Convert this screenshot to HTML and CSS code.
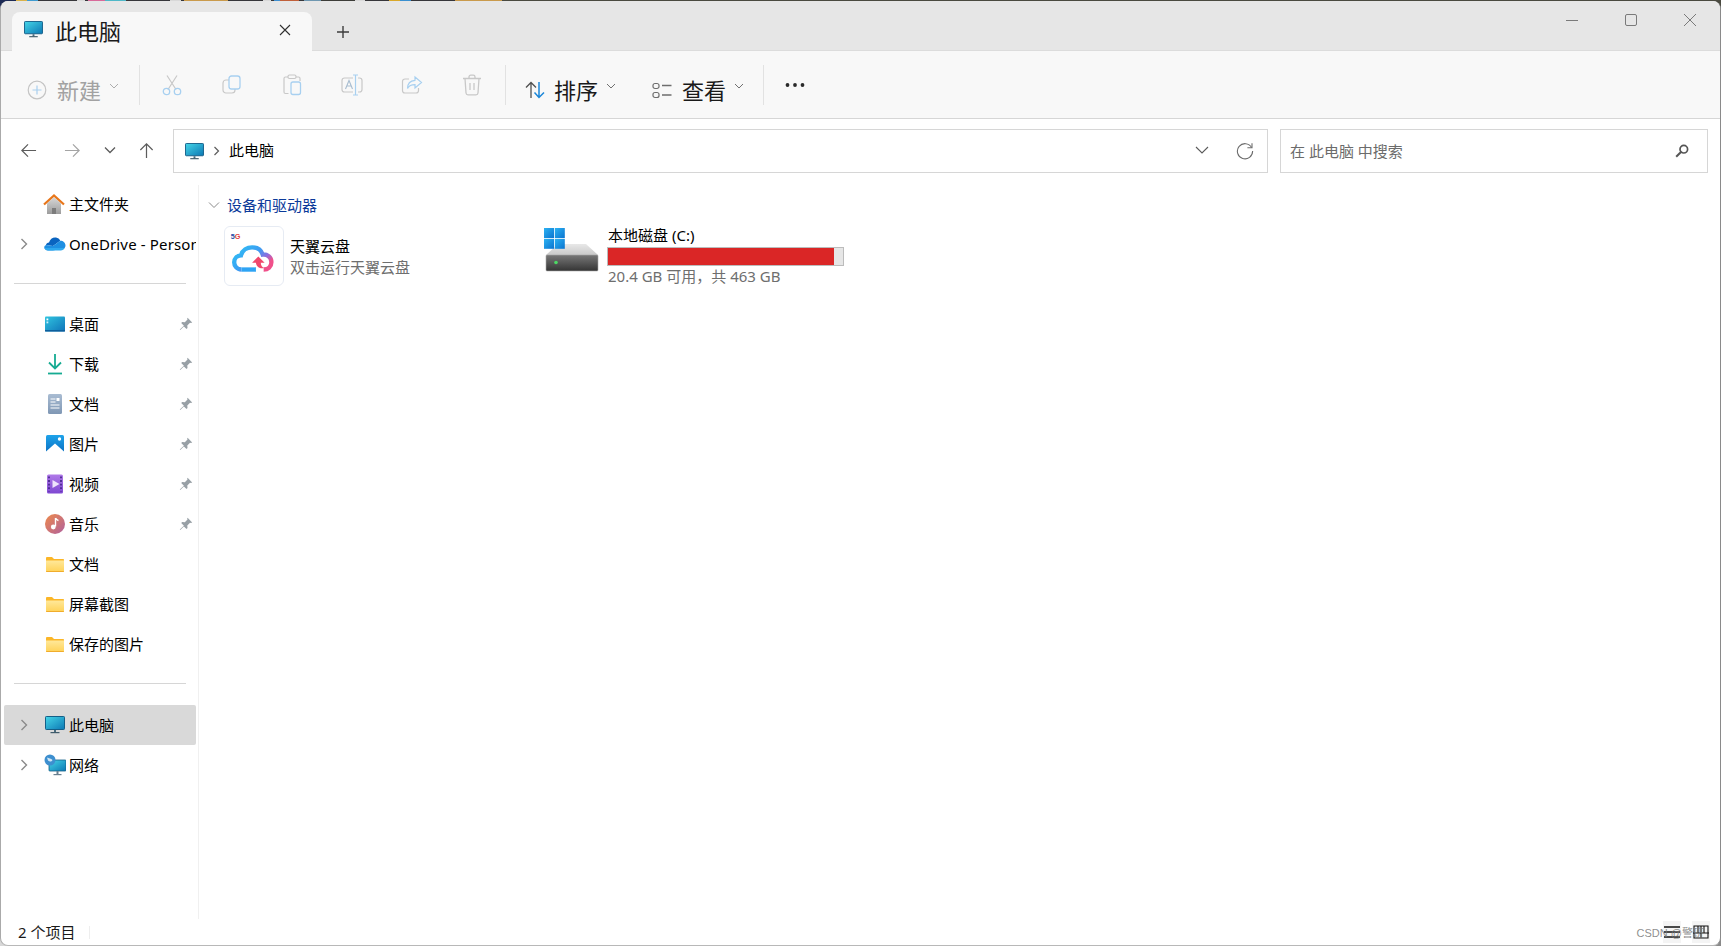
FILE: index.html
```html
<!DOCTYPE html>
<html lang="zh-CN">
<head>
<meta charset="utf-8">
<title>此电脑</title>
<link rel="stylesheet" href="styles.css">
</head>
<body>
<svg class="defs" aria-hidden="true">
  <defs>
    <linearGradient id="pcg" x1="0" y1="0" x2="1" y2="1"><stop offset="0" stop-color="#45d6e8"/><stop offset="1" stop-color="#0c78b4"/></linearGradient>
    <linearGradient id="deskg" x1="0" y1="0" x2="1" y2="1"><stop offset="0" stop-color="#30c4e0"/><stop offset="1" stop-color="#0f73b8"/></linearGradient>
    <linearGradient id="homeg" x1="0" y1="0" x2="0" y2="1"><stop offset="0" stop-color="#d8d8d8"/><stop offset="1" stop-color="#9c9c9c"/></linearGradient>
    <linearGradient id="docg" x1="0" y1="0" x2="0" y2="1"><stop offset="0" stop-color="#a9bcd2"/><stop offset="1" stop-color="#7f97b4"/></linearGradient>
    <linearGradient id="picg" x1="0" y1="0" x2="0" y2="1"><stop offset="0" stop-color="#1ea3ea"/><stop offset="1" stop-color="#0b6fc2"/></linearGradient>
    <linearGradient id="vidg" x1="0" y1="0" x2="0" y2="1"><stop offset="0" stop-color="#b07ae8"/><stop offset="1" stop-color="#7f48d2"/></linearGradient>
    <linearGradient id="musg" x1="0" y1="0" x2="1" y2="1"><stop offset="0" stop-color="#ee8a4a"/><stop offset="1" stop-color="#b0609e"/></linearGradient>
    <linearGradient id="folg" x1="0" y1="0" x2="0" y2="1"><stop offset="0" stop-color="#ffe89a"/><stop offset="1" stop-color="#ffd257"/></linearGradient>
    <linearGradient id="cloudg" x1="0" y1="0" x2="1" y2="0.6"><stop offset="0" stop-color="#2cc4f5"/><stop offset="0.55" stop-color="#3d9cf2"/><stop offset="0.8" stop-color="#8a6ee0"/><stop offset="1" stop-color="#f0508a"/></linearGradient>
    <linearGradient id="driveg" x1="0" y1="0" x2="0" y2="1"><stop offset="0" stop-color="#787878"/><stop offset="1" stop-color="#343434"/></linearGradient>
    <linearGradient id="drivet" x1="0" y1="0" x2="0" y2="1"><stop offset="0" stop-color="#e8e8e8"/><stop offset="1" stop-color="#c4c4c4"/></linearGradient>
    <linearGradient id="wing" x1="0" y1="0" x2="1" y2="1"><stop offset="0" stop-color="#2cb2f2"/><stop offset="1" stop-color="#0a74d0"/></linearGradient>
    <symbol id="pc" viewBox="0 0 20 18">
      <rect x="0.5" y="0.5" width="19" height="13" rx="0.8" fill="url(#pcg)" stroke="#145f88"/>
      <rect x="9" y="14" width="2" height="2.4" fill="#4a6a7c"/>
      <rect x="5.5" y="16" width="9" height="1.2" fill="#3f5b6b"/>
    </symbol>
    <symbol id="folder" viewBox="0 0 18 15">
      <path d="M0 1.2C0 .5.5 0 1.2 0H6l2 2h9c.6 0 1 .4 1 1v1H0z" fill="#fbb628"/>
      <path d="M0 3.5h18V14c0 .6-.4 1-1 1H1c-.6 0-1-.4-1-1z" fill="url(#folg)"/>
      <path d="M0 14h18v.2c0 .5-.4.8-.8.8H.8C.4 15 0 14.700 0 14.200z" fill="#f0ac2c"/>
    </symbol>
    <symbol id="pin" viewBox="0 0 14 14">
      <path d="M8.600.8l4.600 4.600-1.200.7-1-.3-2.700 2.700.2 2.600-1 1-2.600-2.700L1.200 13l-.4-.4 4.100-3.900L2.200 6l1-1 2.600.2 2.700-2.700-.3-1z" fill="#98a0a6"/>
    </symbol>
    <symbol id="chev" viewBox="0 0 8 12">
      <path d="M1.500 1l5 5-5 5" fill="none" stroke="#8a8a8a" stroke-width="1.400"/>
    </symbol>
    <symbol id="down" viewBox="0 0 10 6">
      <path d="M1 1l4 4 4-4" fill="none" stroke="#707070" stroke-width="1"/>
    </symbol>
  </defs>
</svg>

<div class="window">
  <header class="titlebar">
    <div class="tab">
      <svg class="i-tabpc"><use href="#pc"/></svg>
      <span class="tab-title">此电脑</span>
      <svg class="i-close" viewBox="0 0 12 12"><path d="M1 1l10 10M11 1L1 11" stroke="#303030" stroke-width="1.100" fill="none"/></svg>
    </div>
    <svg class="i-plus" viewBox="0 0 12 12"><path d="M6 0v12M0 6h12" stroke="#3c3c3c" stroke-width="1.400" fill="none"/></svg>
    <div class="winctl">
      <svg class="wc" viewBox="0 0 14 14"><path d="M1 7.500h12" stroke="#7a7a7a" fill="none"/></svg>
      <svg class="wc" viewBox="0 0 14 14"><rect x="1.500" y="1.500" width="11" height="11" rx="1.500" stroke="#7a7a7a" fill="none"/></svg>
      <svg class="wc" viewBox="0 0 14 14"><path d="M1 1l12 12M13 1L1 13" stroke="#7a7a7a" fill="none"/></svg>
    </div>
  </header>

  <div class="toolbar">
    <div class="tool-new">
      <svg class="i-new" viewBox="0 0 20 20"><circle cx="10" cy="10" r="8.800" fill="none" stroke="#c4c4c4" stroke-width="1.200"/><path d="M10 5.500v9M5.500 10h9" stroke="#a9cfee" stroke-width="1.200"/></svg>
      <span class="tool-label muted">新建</span>
      <svg class="i-down dim"><use href="#down"/></svg>
    </div>
    <div class="sep"></div>
    <div class="icons">
      <div class="ibtn"><svg viewBox="0 0 20 22"><path d="M5 1.500l9 14M15 1.500l-9 14" stroke="#c8c8c8" stroke-width="1.200" fill="none"/><circle cx="4.500" cy="17.500" r="3.200" fill="none" stroke="#a8d0f0" stroke-width="1.300"/><circle cx="15.500" cy="17.500" r="3.200" fill="none" stroke="#a8d0f0" stroke-width="1.300"/></svg></div>
      <div class="ibtn"><svg viewBox="0 0 20 22"><rect x="1" y="6" width="12" height="13" rx="3" fill="#f8f8f8" stroke="#c8c8c8" stroke-width="1.200"/><rect x="7" y="2" width="11" height="13" rx="2.500" fill="#f8f8f8" stroke="#a8d0f0" stroke-width="1.300"/></svg></div>
      <div class="ibtn"><svg viewBox="0 0 20 22"><path d="M6 3H3.500C2.500 3 2 3.500 2 4.500V18c0 1 .5 1.500 1.500 1.500h3M14 3h2.500c1 0 1.500.5 1.500 1.500V7" fill="none" stroke="#c8c8c8" stroke-width="1.200"/><rect x="6" y="1" width="8" height="3.500" rx="1.500" fill="none" stroke="#c8c8c8" stroke-width="1.200"/><rect x="9" y="8" width="9.500" height="12.500" rx="2" fill="none" stroke="#a8d0f0" stroke-width="1.300"/></svg></div>
      <div class="ibtn"><svg viewBox="0 0 22 22"><path d="M12 4H3.500C2 4 1 5 1 6.500v9C1 17 2 18 3.500 18H12M17 4h1.500C20 4 21 5 21 6.500v9c0 1.500-1 2.500-2.500 2.500H17" fill="none" stroke="#c8c8c8" stroke-width="1.200"/><path d="M14.500 1v20M12 1h5M12 21h5" fill="none" stroke="#a8d0f0" stroke-width="1.200"/><path d="M4.500 15L8 6.500 11.500 15M5.800 12h4.400" fill="none" stroke="#a8bdd0" stroke-width="1.100"/></svg></div>
      <div class="ibtn"><svg viewBox="0 0 22 22"><path d="M8 5H4C2.500 5 1.500 6 1.500 7.500v9C1.500 18 2.500 19 4 19h11c1.500 0 2.500-1 2.500-2.500V14" fill="none" stroke="#c8c8c8" stroke-width="1.200"/><path d="M14 3l6.500 5.500L14 14v-3.300c-3.500 0-6 1-7.500 3.800 0-4.800 3-7.800 7.500-8.200z" fill="none" stroke="#a8d0f0" stroke-width="1.200"/></svg></div>
      <div class="ibtn"><svg viewBox="0 0 20 22"><path d="M1 4.500h18M7 4.500V3c0-1 .8-1.800 1.800-1.800h2.400C12.200 1.200 13 2 13 3v1.500M3 4.500l1 14.500c.1 1 .8 1.800 2 1.800h8c1.200 0 1.900-.8 2-1.800l1-14.500" fill="none" stroke="#c8c8c8" stroke-width="1.300"/><path d="M8 9v7M12 9v7" stroke="#c8c8c8" stroke-width="1.300"/></svg></div>
    </div>
    <div class="sep"></div>
    <div class="tool-sort">
      <svg class="i-sort" viewBox="0 0 20 18"><path d="M6 17V1.500M1 6.500l5-5 5 5" stroke="#505050" stroke-width="1.300" fill="none"/><path d="M14 1v15.500M9.500 11.500l4.500 5 5-5" stroke="#1a86d8" stroke-width="1.500" fill="none"/></svg>
      <span class="tool-label">排序</span>
      <svg class="i-down"><use href="#down"/></svg>
    </div>
    <div class="tool-view">
      <svg class="i-view" viewBox="0 0 20 18"><rect x="1" y="1.500" width="6" height="5" rx="2" fill="none" stroke="#6e6e6e" stroke-width="1.200"/><rect x="1" y="10.500" width="6" height="5" rx="2" fill="none" stroke="#6e6e6e" stroke-width="1.200"/><path d="M10 3.500h9.500M10 13h9.500" stroke="#6e6e6e" stroke-width="1.300"/></svg>
      <span class="tool-label">查看</span>
      <svg class="i-down"><use href="#down"/></svg>
    </div>
    <div class="sep"></div>
    <svg class="i-more" viewBox="0 0 20 6"><circle cx="2.500" cy="3" r="1.900" fill="#2a2a2a"/><circle cx="10" cy="3" r="1.900" fill="#2a2a2a"/><circle cx="17.500" cy="3" r="1.900" fill="#2a2a2a"/></svg>
  </div>

  <div class="navrow">
    <div class="navbtns">
      <svg class="nav" viewBox="0 0 18 16"><path d="M17 8H2M8.500 1.500L2 8l6.500 6.500" stroke="#5c5c5c" stroke-width="1.300" fill="none"/></svg>
      <svg class="nav" viewBox="0 0 18 16"><path d="M1 8h15M9.500 1.500L16 8l-6.500 6.500" stroke="#a4a4a4" stroke-width="1.300" fill="none"/></svg>
      <svg class="nav-d" viewBox="0 0 12 8"><path d="M1 1.500l5 5 5-5" stroke="#5c5c5c" stroke-width="1.300" fill="none"/></svg>
      <svg class="nav" viewBox="0 0 16 18"><path d="M8 17V2M1.500 8.500L8 2l6.500 6.500" stroke="#5c5c5c" stroke-width="1.300" fill="none"/></svg>
    </div>
    <div class="addr">
      <svg class="i-addrpc"><use href="#pc"/></svg>
      <svg class="i-crumb" viewBox="0 0 8 12"><path d="M1.500 2l4 4-4 4" fill="none" stroke="#5c5c5c" stroke-width="1.200"/></svg>
      <span class="crumb">此电脑</span>
      <svg class="i-addrdown" viewBox="0 0 14 8"><path d="M1 1l6 6 6-6" stroke="#5c5c5c" stroke-width="1.100" fill="none"/></svg>
      <svg class="i-refresh" viewBox="0 0 18 18"><path d="M15.600 5.500A7.600 7.600 0 1 0 16.600 9" stroke="#6c6c6c" stroke-width="1.100" fill="none"/><path d="M16 1.200v4.600h-4.600" stroke="#6c6c6c" stroke-width="1.100" fill="none"/></svg>
    </div>
    <div class="search">
      <span class="search-ph">在 此电脑 中搜索</span>
      <svg class="i-search" viewBox="0 0 14 14"><circle cx="8.800" cy="5.200" r="3.800" fill="none" stroke="#555" stroke-width="1.700"/><path d="M6 8L1.200 12.800" stroke="#555" stroke-width="2"/></svg>
    </div>
  </div>

  <div class="main">
    <nav class="sidebar">
      <div class="row">
        <svg class="ico ico-home" viewBox="0 0 22 20"><path d="M4 9.500L11 3l7 6.500V20H4z" fill="url(#homeg)"/><path d="M9 20v-6h4v6z" fill="#7c7c7c"/><path d="M1 10.500L11 1.500l10 9" fill="none" stroke="#e8761a" stroke-width="2.200"/></svg>
        <span class="label">主文件夹</span>
      </div>
      <div class="row">
        <svg class="chev"><use href="#chev"/></svg>
        <svg class="ico" viewBox="0 0 22 16"><path d="M5 6.500C6 3 9 1 12 1.500c2 .3 3.500 1.500 4.200 3.300L9 10 2 9c.2-1.500 1.500-2.500 3-2.500z" fill="#0a64c0"/><path d="M2 9l7 1 7.200-5.200c2.800-.2 5.300 2 5.300 4.700 0 .9-.3 1.800-.8 2.500L9 14.500H4c-2.200 0-3.800-1.500-3.800-3.200C.2 10.400.9 9.600 2 9z" fill="#1e8fe2"/><path d="M20.700 12c-.7 1.500-2.200 2.500-3.900 2.500H4C2.400 14.500 1 13.500.5 12z" fill="#2ea8ee"/></svg>
        <span class="label label-latin">OneDrive - Personal</span>
      </div>
      <div class="divider"></div>
      <div class="row">
        <svg class="ico" viewBox="0 0 22 17"><rect x="1" y="1" width="20" height="15" rx="1" fill="url(#deskg)"/><rect x="1" y="14.500" width="20" height="1.500" fill="#0e5f9c"/><rect x="2.500" y="3" width="1.800" height="1.800" fill="#fff"/><rect x="2.500" y="6" width="1.800" height="1.800" fill="#cdeefa"/></svg>
        <span class="label">桌面</span>
        <svg class="pin"><use href="#pin"/></svg>
      </div>
      <div class="row">
        <svg class="ico" viewBox="0 0 22 22"><path d="M11 1v14M5 9.500l6 6 6-6" stroke="#16ab92" stroke-width="1.800" fill="none"/><path d="M4 20.500h14" stroke="#16ab92" stroke-width="1.800"/></svg>
        <span class="label">下载</span>
        <svg class="pin"><use href="#pin"/></svg>
      </div>
      <div class="row">
        <svg class="ico" viewBox="0 0 22 22"><rect x="4" y="1" width="14" height="20" rx="1.500" fill="url(#docg)"/><path d="M6.500 6h5M6.500 9h5M6.500 12h9M6.500 15h9" stroke="#fff" stroke-width="1"/><rect x="12.500" y="5" width="3" height="3" fill="#fff"/></svg>
        <span class="label">文档</span>
        <svg class="pin"><use href="#pin"/></svg>
      </div>
      <div class="row">
        <svg class="ico" viewBox="0 0 22 22"><rect x="2" y="2" width="18" height="18" rx="1.500" fill="url(#picg)"/><path d="M2 18.500L11 10.500l9 8V20H2z" fill="#fff"/><circle cx="15.500" cy="6" r="1.700" fill="#fff"/></svg>
        <span class="label">图片</span>
        <svg class="pin"><use href="#pin"/></svg>
      </div>
      <div class="row">
        <svg class="ico" viewBox="0 0 22 22"><rect x="3" y="1.500" width="16" height="19" rx="1.500" fill="url(#vidg)"/><path d="M8.500 7l7 4-7 4z" fill="#efe4fb"/><path d="M5 3.500v15M17 3.500v15" stroke="#4a2a90" stroke-width="1.800" stroke-dasharray="1.800 1.800"/></svg>
        <span class="label">视频</span>
        <svg class="pin"><use href="#pin"/></svg>
      </div>
      <div class="row">
        <svg class="ico" viewBox="0 0 22 22"><circle cx="11" cy="11" r="10" fill="url(#musg)"/><path d="M11.500 5v8.500" stroke="#fff" stroke-width="1.400"/><path d="M11.500 5c.5 1.500 2 2 3 2.500" stroke="#fff" stroke-width="1.400" fill="none"/><circle cx="9.300" cy="14" r="2.400" fill="#fff"/></svg>
        <span class="label">音乐</span>
        <svg class="pin"><use href="#pin"/></svg>
      </div>
      <div class="row">
        <svg class="ico-f"><use href="#folder"/></svg>
        <span class="label">文档</span>
      </div>
      <div class="row">
        <svg class="ico-f"><use href="#folder"/></svg>
        <span class="label">屏幕截图</span>
      </div>
      <div class="row">
        <svg class="ico-f"><use href="#folder"/></svg>
        <span class="label">保存的图片</span>
      </div>
      <div class="divider divider-wide"></div>
      <div class="row selected">
        <svg class="chev"><use href="#chev"/></svg>
        <svg class="ico-pc"><use href="#pc"/></svg>
        <span class="label">此电脑</span>
      </div>
      <div class="row">
        <svg class="chev"><use href="#chev"/></svg>
        <svg class="ico" viewBox="0 0 22 22"><rect x="5" y="6" width="17" height="11" rx="0.800" fill="url(#pcg)" stroke="#145f88" stroke-width="0.800"/><rect x="12.500" y="17" width="2" height="3" fill="#6a8090"/><rect x="9.500" y="20" width="8" height="1.200" fill="#6a8090"/><circle cx="6" cy="6" r="5.500" fill="#3d8fcf"/><path d="M3 3.500c2 1 4 .5 5.500 2.500-1 2-3 2-4.500.5z" fill="#cfe6f6"/></svg>
        <span class="label">网络</span>
      </div>
    </nav>

    <section class="content">
      <div class="group">
        <svg class="group-chev" viewBox="0 0 12 8"><path d="M1 1.500l5 5 5-5" stroke="#8a8a8a" stroke-width="1" fill="none"/></svg>
        <span class="group-title">设备和驱动器</span>
      </div>
      <div class="tiles">
        <div class="tile">
          <div class="appbox">
            <svg class="appicon" viewBox="0 0 60 60">
              <text x="6" y="12" class="fiveg">5<tspan class="fiveg-g">G</tspan></text>
              <path d="M17 44C12 44 9.500 40 9.500 36.500c0-4 3-7 7-7.200C18 24 23 21 28 21c5.500 0 9.500 3 11 7.500 4.500-.5 9 2.500 9 8 0 4.500-3.500 7.500-8 7.500" fill="none" stroke="url(#cloudg)" stroke-width="4.500"/>
              <path d="M17 44h15" stroke="#2ea4f4" stroke-width="4.500" fill="none"/>
              <path d="M28 37l6.500-6.500 6.500 6.500h-4c.2 3 1.500 4.500 3.500 5.500-4 1-8-1-8.500-5.500z" fill="#f0486c"/>
            </svg>
          </div>
          <div class="tile-text">
            <div class="tile-name">天翼云盘</div>
            <div class="tile-sub">双击运行天翼云盘</div>
          </div>
        </div>
        <div class="tile drive">
          <svg class="driveicon" viewBox="0 0 56 46">
            <path d="M2 28L14 17h28l12 11v2H2z" fill="url(#drivet)"/>
            <rect x="2" y="28" width="52" height="16" rx="1" fill="url(#driveg)" stroke="#a8a8a8" stroke-width="0.600"/>
            <circle cx="12" cy="35.500" r="1.800" fill="#4cd964"/>
            <rect x="0" y="1" width="10" height="10" fill="url(#wing)"/>
            <rect x="10.800" y="1" width="10" height="10" fill="url(#wing)"/>
            <rect x="0" y="11.800" width="10" height="10" fill="url(#wing)"/>
            <rect x="10.800" y="11.800" width="10" height="10" fill="url(#wing)"/>
          </svg>
          <div class="drive-text">
            <div class="drive-name">本地磁盘 (C:)</div>
            <div class="bar"><div class="bar-fill"></div></div>
            <div class="drive-sub">20.4 GB 可用，共 463 GB</div>
          </div>
        </div>
      </div>
    </section>
  </div>

  <footer class="status">
    <span class="status-text">2 个项目</span>
    <span class="status-sep"></span>
    <div class="viewbtns">
      <span class="vbtn"><svg viewBox="0 0 16 14"><path d="M0 2h16M0 7h16M0 12h16" stroke="#111" stroke-width="1.400"/></svg></span>
      <span class="vbtn"><svg viewBox="0 0 16 14"><path d="M1 1h14v12H1zM0 8h16M8 1v12M5 1v7M11 1v7" fill="none" stroke="#111" stroke-width="1.100"/></svg></span>
    </div>
    <span class="watermark">CSDN @警班</span>
  </footer>
</div>
</body>
</html>
```

FILE: styles.css
```css
* { box-sizing: border-box; }

html, body { height: 100%; }

body {
  margin: 0;
  overflow: hidden;
  padding-top: 1px;
  font-family: "Noto Sans", "Noto Sans CJK SC", sans-serif;
  font-size: 15px;
  color: #000;
  background:
    linear-gradient(90deg,
      #1c2a55 0 16px, #d9b24a 16px 27px, #3f9bd0 27px 38px, #36363a 38px 77px,
      #d8d8d8 77px 85px, #36363a 85px 88px, #d86a9a 88px 105px, #4fb8c8 105px 126px,
      #36363a 126px 170px, #d8d8d8 170px 181px, #36363a 181px 184px, #c99a4c 184px 228px,
      #36363a 228px 263px, #d8d8d8 263px 271px, #36363a 271px 274px, #3f8fd0 274px 280px,
      #c0603a 280px 299px, #36363a 299px 304px, #6f97b0 304px 321px, #3c3c38 321px 355px,
      #d8d8d8 355px 365px, #36363a 365px 389px, #d9a82a 389px 400px, #3a90d0 400px 411px,
      #36363a 411px 455px, #c99a4c 455px 502px, #4a4a40 502px 1721px) top left / 100% 1px no-repeat,
    linear-gradient(90deg, #1c2a55 0 10px, transparent 10px 1710px, #4a4a40 1710px) top left / 100% 10px no-repeat,
    linear-gradient(90deg, #d8d8d8 0 10px, transparent 10px 1710px, #8a8a8a 1710px);
}

.defs { display: block; width: 0; height: 0; overflow: hidden; }

.window {
  height: 945px;
  display: flex;
  flex-direction: column;
  overflow: hidden;
  background: #fff;
  border-radius: 8px;
  border-left: 1px solid #aaa;
  border-right: 1px solid #8a8a8a;
  border-bottom: 1px solid #b8b8b8;
}

/* title bar */
.titlebar {
  height: 50px;
  flex: none;
  display: flex;
  align-items: flex-end;
  padding-left: 11px;
  background: #e6e6e6;
  border-bottom: 1px solid #dcdcdc;
}

.tab {
  width: 300px;
  height: 39px;
  margin-bottom: -1px;
  display: flex;
  align-items: center;
  padding: 0 21px 0 12px;
  background: #f8f8f8;
  border-radius: 8px 8px 0 0;
}

.i-tabpc { width: 19px; height: 17px; flex: none; margin-bottom: 4px; }

.tab-title {
  margin: 0 0 2px 12px;
  font-size: 22px;
  line-height: 30px;
  color: #1a1a1a;
}

.i-close { width: 12px; height: 12px; margin-left: auto; margin-bottom: 3px; }

.i-plus { width: 12px; height: 12px; margin-left: 25px; margin-bottom: 12px; }

.winctl {
  margin-left: auto;
  height: 100%;
  display: flex;
  align-items: flex-start;
  padding: 12px 23px 0 0;
  gap: 45px;
}

.wc { width: 14px; height: 14px; }

/* toolbar */
.toolbar {
  height: 68px;
  flex: none;
  display: flex;
  align-items: center;
  padding-left: 26px;
  background: #f8f8f8;
  border-bottom: 1px solid #d6d6d6;
}

.sep { width: 1px; height: 40px; flex: none; background: #e2e2e2; }

.tool-label {
  font-size: 22px;
  line-height: 30px;
  margin-top: 10px;
  color: #1a1a1a;
}

.muted { color: #a2a2a2; }

.tool-new { width: 112px; display: flex; align-items: center; }

.i-new { width: 20px; height: 20px; margin-top: 10px; margin-right: 10px; flex: none; }

.i-down { width: 10px; height: 6px; margin: 0 0 -3px 8px; flex: none; }

.dim { opacity: .55; }

.icons { display: flex; margin: 0 3px 0 2px; }

.ibtn { width: 60px; height: 40px; display: flex; align-items: center; justify-content: center; }

.ibtn svg { width: 22px; height: 22px; }

.tool-sort { display: flex; align-items: center; margin-left: 19px; width: 127px; }

.i-sort { width: 20px; height: 18px; margin-top: 10px; margin-right: 9px; flex: none; }

.tool-view { display: flex; align-items: center; width: 111px; }

.i-view { width: 20px; height: 18px; margin-top: 12px; margin-right: 10px; flex: none; }

.i-more { width: 20px; height: 6px; margin-left: 21px; margin-top: 1px; }

/* address row */
.navrow {
  height: 66px;
  flex: none;
  display: flex;
  align-items: flex-start;
  padding-top: 10px;
}

.navbtns { width: 172px; height: 42px; display: flex; align-items: center; padding-left: 19px; }

.nav { width: 17px; height: 17px; flex: none; margin-right: 27px; }

.nav-d { width: 12px; height: 8px; flex: none; margin: 0 22px 0 -4px; }

.nav:last-child { margin: 0; }

.addr {
  width: 1095px;
  height: 44px;
  display: flex;
  align-items: center;
  padding: 0 13px 0 11px;
  border: 1px solid #d6d6d6;
}

.i-addrpc { width: 19px; height: 17px; flex: none; }

.i-crumb { width: 8px; height: 12px; margin-left: 9px; flex: none; }

.crumb { margin: 0 0 3px 8px; font-size: 15px; }

.i-addrdown { width: 14px; height: 8px; margin: 0 0 2px auto; }

.i-refresh { width: 18px; height: 18px; margin-left: 27px; }

.search {
  width: 428px;
  height: 44px;
  margin-left: 12px;
  display: flex;
  align-items: center;
  padding: 0 18px 0 9px;
  border: 1px solid #d6d6d6;
}

.search-ph { font-size: 15px; color: #6b6b6b; margin-bottom: 2px; }

.i-search { width: 14px; height: 14px; margin-left: auto; }

/* main */
.main { flex: 1; min-height: 0; display: flex; }

.sidebar {
  width: 198px;
  flex: none;
  border-right: 1px solid #f0f0f0;
  padding-left: 3px;
}

.row {
  height: 40px;
  width: 192px;
  display: grid;
  grid-template-columns: 40px 25px minmax(0, 1fr) auto;
  align-items: center;
  border-radius: 2px;
}

.row:first-child { margin-top: -1px; }

.row.selected { background: #d9d9d9; }

.chev { grid-column: 1; width: 8px; height: 12px; margin-left: 16px; }

.ico, .ico-f, .ico-pc { grid-column: 2; }

.ico { width: 22px; height: 22px; }

.ico-home { margin-left: -1px; }

.ico-f { width: 18px; height: 15px; margin-left: 2px; }

.ico-pc { width: 20px; height: 18px; margin-left: 1px; }

.label {
  grid-column: 3;
  min-width: 0;
  white-space: nowrap;
  overflow: hidden;
  line-height: 22px;
}

.label-latin { letter-spacing: .15px; }

.pin { grid-column: 4; width: 14px; height: 14px; margin-right: 3px; }

.divider { height: 1px; margin: 19px 0 20px 10px; width: 172px; background: #d6d6d6; }

.divider-wide { margin-bottom: 21px; }

/* content */
.content { flex: 1; min-width: 0; padding-left: 25px; }

.group { height: 41px; padding-bottom: 2px; display: flex; align-items: center; }

.group-chev { width: 12px; height: 8px; margin-right: 7px; flex: none; margin-left: -16px; }

.group-title { color: #0b3a9a; line-height: 22px; }

.tiles { display: flex; }

.tile { width: 320px; display: flex; align-items: flex-start; }

.appbox {
  width: 60px;
  height: 60px;
  flex: none;
  background: #fff;
  border: 1px solid #e6ebf3;
  border-radius: 6px;
}

.appicon { display: block; width: 58px; height: 58px; }

.fiveg { font-family: "Liberation Sans", sans-serif; font-size: 7.500px; font-weight: 700; fill: #1c4aa8; }

.fiveg-g { fill: #e0403c; }

.tile-text { margin: 10px 0 0 6px; line-height: 21px; }

.tile-sub { color: #6e6e6e; }

.drive { margin-top: -1px; }

.driveicon { width: 56px; height: 46px; flex: none; margin-top: 2px; }

.drive-text { margin-left: 7px; width: 237px; }

.drive-name { line-height: 20px; margin-bottom: 2px; padding-left: 1px; }

.bar { height: 19px; border: 1px solid #bcbcbc; background: #e6e6e6; }

.bar-fill { width: 96%; height: 100%; background: #da2626; }

.drive-sub { line-height: 20px; color: #6e6e6e; padding-left: 1px; }

/* status */
.status {
  height: 26px;
  flex: none;
  position: relative;
  display: flex;
  align-items: center;
  padding: 0 10px 0 17px;
}

.status-text { color: #1a1a1a; line-height: 20px; }

.status-sep { width: 1px; height: 13px; margin-left: 14px; background: #eee; }

.viewbtns { margin-left: auto; display: flex; gap: 11px; }

.vbtn { width: 18px; height: 22px; display: flex; align-items: center; justify-content: center; background: #f4f4f4; }

.vbtn svg { width: 16px; height: 14px; }

.watermark {
  position: absolute;
  right: 16px;
  top: 5px;
  font-family: "Liberation Sans", "Noto Sans CJK SC", sans-serif;
  font-size: 11px;
  color: rgba(120, 120, 120, .85);
}
```
